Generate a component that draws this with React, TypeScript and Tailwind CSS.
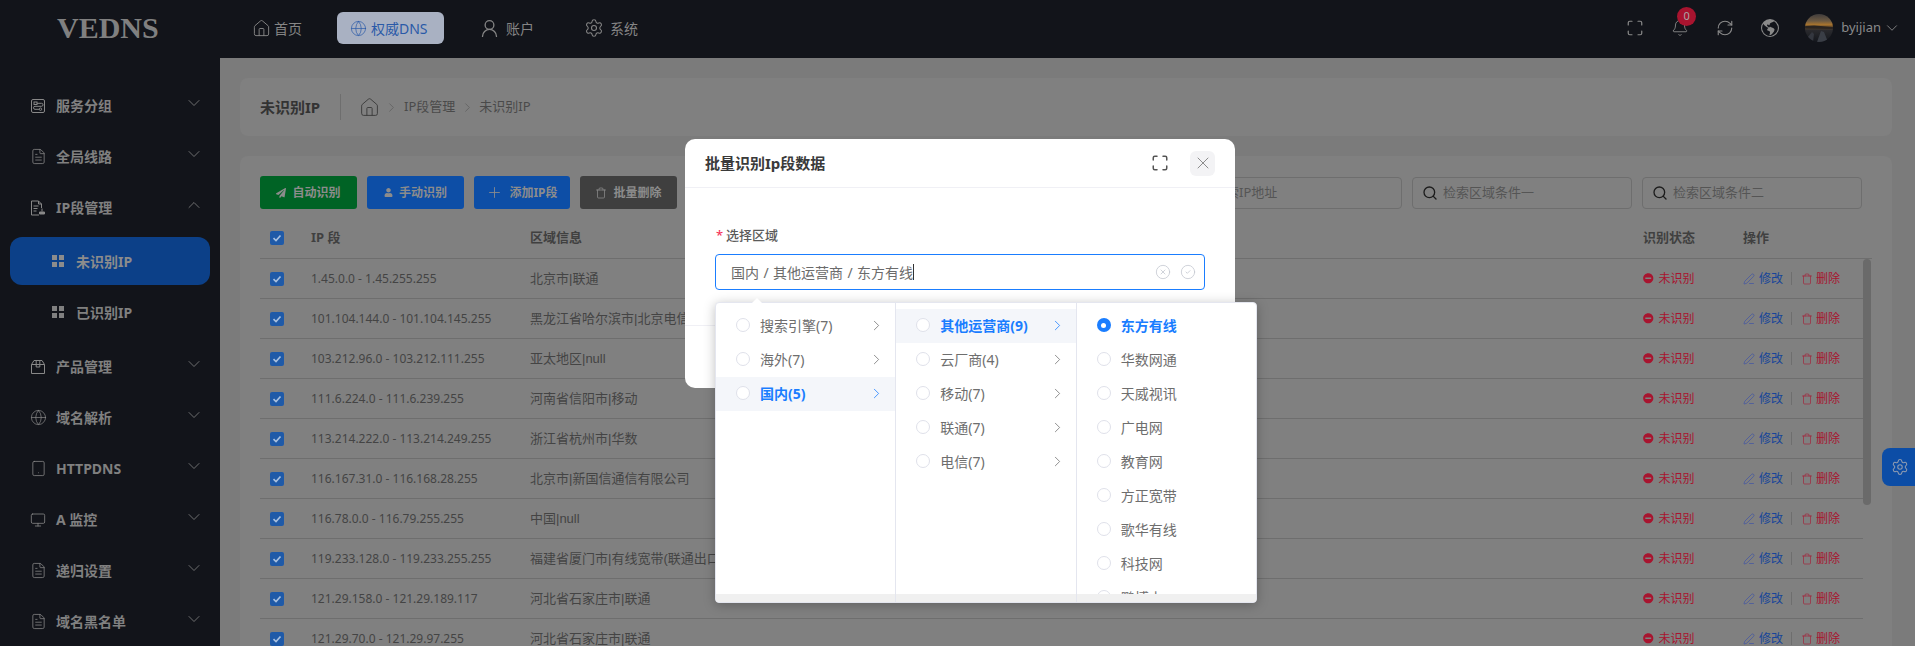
import React from "react";
import {
  House, Globe, UserRound, Settings, ChevronDown, ChevronUp, ChevronRight, FileText, Tablet, Monitor,
  Maximize, Bell, RefreshCw, Plus, Trash, Search, PenLine, X, CircleX, CircleCheck,
} from "lucide-react";
import { FaPaperPlane, FaUser, FaMinusCircle } from "react-icons/fa";
import { BsGlobeAmericas } from "react-icons/bs";

const ServiceIcon = () => (
  <svg width="14" height="14" viewBox="0 0 14 14" fill="none" stroke="currentColor" strokeWidth="1" className="shrink-0">
    <rect x="0.5" y="0.5" width="13" height="13" rx="1.5" />
    <rect x="3" y="3" width="3" height="2.5" />
    <path d="M6 4.3h4.5a1 1 0 0 1 0 3H4a1.3 1.3 0 0 0 0 3h4" />
    <circle cx="9.5" cy="10.2" r="1.2" />
  </svg>
);
const StampFileIcon = () => (
  <svg width="16" height="16" viewBox="0 0 16 16" fill="none" stroke="currentColor" strokeWidth="1" className="shrink-0">
    <path d="M9 15H1.5V1h7l3 3v4" />
    <path d="M8.5 1v3h3M3.5 6h5M3.5 8.5h4M3.5 11h3" />
    <path d="M12 8.5v3M9.5 12h5v2h-5z" fill="currentColor" />
  </svg>
);
const BoxIcon = () => (
  <svg width="14" height="14" viewBox="0 0 14 14" fill="none" stroke="currentColor" strokeWidth="1" className="shrink-0">
    <path d="M0.5 4.5h13v9h-13zM0.5 4.5l2.5-4h8l2.5 4" />
    <path d="M5.2 0.5v6.5h3.6V0.5" />
  </svg>
);
const GridIcon = () => (
  <svg width="12" height="12" viewBox="0 0 12 12" fill="currentColor" className="shrink-0">
    <rect x="0" y="0" width="5" height="5" />
    <rect x="7" y="0" width="5" height="5" />
    <rect x="0" y="7" width="5" height="5" />
    <rect x="7" y="7" width="5" height="5" />
  </svg>
);
const Avatar = () => (
  <svg width="28" height="28" viewBox="0 0 28 28" className="rounded-full shrink-0">
    <defs>
      <linearGradient id="sky" x1="0" y1="0" x2="0" y2="1">
        <stop offset="0" stopColor="#3f3c3c" />
        <stop offset="0.25" stopColor="#6d5a42" />
        <stop offset="0.38" stopColor="#a8742e" />
        <stop offset="0.46" stopColor="#6a4c28" />
        <stop offset="0.58" stopColor="#2a2a2e" />
        <stop offset="1" stopColor="#14171d" />
      </linearGradient>
    </defs>
    <rect width="28" height="28" fill="url(#sky)" />
    <path d="M0 12 L9 11.5 L28 13 L28 15 L0 14.5 Z" fill="#2a2420" />
    <path d="M12 28 L16 17 L19 18 L23 28 Z" fill="#3a3e46" />
    <path d="M2 24 L7 18 L9 20 L8 28 L2 28 Z" fill="#34373f" />
  </svg>
);

const menu = [
  { label: "服务分组", icon: <ServiceIcon /> },
  { label: "全局线路", icon: <FileText size={17} strokeWidth={1.1} className="shrink-0" /> },
  { label: "IP段管理", icon: <StampFileIcon />, open: true },
  { label: "产品管理", icon: <BoxIcon /> },
  { label: "域名解析", icon: <Globe size={17} strokeWidth={1} className="shrink-0" /> },
  { label: "HTTPDNS", icon: <Tablet size={17} strokeWidth={1.1} className="shrink-0" /> },
  { label: "A 监控", icon: <Monitor size={16} strokeWidth={1.2} className="shrink-0" /> },
  { label: "递归设置", icon: <FileText size={17} strokeWidth={1.1} className="shrink-0" /> },
  { label: "域名黑名单", icon: <FileText size={17} strokeWidth={1.1} className="shrink-0" /> },
];

const rows = [
  ["1.45.0.0 - 1.45.255.255", "北京市|联通"],
  ["101.104.144.0 - 101.104.145.255", "黑龙江省哈尔滨市|北京电信通"],
  ["103.212.96.0 - 103.212.111.255", "亚太地区|null"],
  ["111.6.224.0 - 111.6.239.255", "河南省信阳市|移动"],
  ["113.214.222.0 - 113.214.249.255", "浙江省杭州市|华数"],
  ["116.167.31.0 - 116.168.28.255", "北京市|新国信通信有限公司"],
  ["116.78.0.0 - 116.79.255.255", "中国|null"],
  ["119.233.128.0 - 119.233.255.255", "福建省厦门市|有线宽带(联通出口)"],
  ["121.29.158.0 - 121.29.189.117", "河北省石家庄市|联通"],
  ["121.29.70.0 - 121.29.97.255", "河北省石家庄市|联通"],
];

const Check = () => (
  <span className="w-[14px] h-[14px] rounded-[2px] bg-[#1f5aa8] flex items-center justify-center shrink-0">
    <svg width="10" height="10" viewBox="0 0 10 10" fill="none" stroke="#a8c0e0" strokeWidth="1.6">
      <path d="M1.5 5.2 L4 7.6 L8.5 2.4" />
    </svg>
  </span>
);

const Radio = ({ on }: { on?: boolean }) =>
  on ? (
    <span className="w-[14px] h-[14px] rounded-full bg-[#1a7dff] flex items-center justify-center shrink-0">
      <span className="w-[5px] h-[5px] rounded-full bg-white" />
    </span>
  ) : (
    <span className="w-[14px] h-[14px] rounded-full border border-[#dfe1ea] bg-white shrink-0" />
  );

const CasRow = ({ label, active, arrow, on }: { label: string; active?: boolean; arrow?: boolean; on?: boolean }) => (
  <div className={`h-[34px] shrink-0 flex items-center pl-[20px] pr-[10px] pb-[2px] text-[14px] ${active ? "bg-[#f4f6fa]" : ""}`}>
    <Radio on={on} />
    <span className={`ml-[10px] whitespace-nowrap ${active || on ? "text-[#1a7dff] font-bold" : "text-[#6e6e6e]"}`}>{label}</span>
    {arrow && (
      <ChevronRight size={17} strokeWidth={1.1} className={`ml-auto ${active ? "text-[#1a7dff]" : "text-[#707070]"}`} />
    )}
  </div>
);

const CasColumn = ({ children, border }: { children: React.ReactNode; border?: boolean }) => (
  <div className={`w-[180px] flex-1 flex flex-col ${border ? "border-r border-[#e4e6ef]" : ""}`}>
    <div className="flex-1 min-h-0 overflow-hidden pt-[6px] flex flex-col">{children}</div>
    <div className="h-[8px] shrink-0 bg-[#f0f0f0]" />
  </div>
);

const SearchBox = ({ w, text }: { w: string; text: string }) => (
  <div className={`${w} h-[32px] border border-[#6e6e6e] rounded-[4px] flex items-center pl-[9px] gap-[5px] text-[13px] text-[#555]`}>
    <Search size={16} strokeWidth={2} className="text-[#1c1c1c] shrink-0" />
    <span className="whitespace-nowrap">{text}</span>
  </div>
);

const ActionButton = ({ bg, icon, label, w }: { bg: string; icon: React.ReactNode; label: string; w: string }) => (
  <div className={`${bg} ${w} h-[33px] rounded-[3px] flex items-center justify-center gap-[6px] text-[12px] font-bold text-[#8c8c8c]`}>
    {icon}
    {label}
  </div>
);

export default function App() {
  return (
    <div className="relative w-[1915px] h-[646px] overflow-hidden flex flex-col bg-[#7b7b7b] font-['Noto_Sans','Noto_Sans_CJK_SC',sans-serif]">
      {/* top bar */}
      <header className="h-[58px] shrink-0 bg-[#12141a] flex items-center pb-[2px] text-[#858585] text-[14px]">
        <div className="w-[240px] shrink-0 pl-[57px] font-['Liberation_Serif',serif] font-bold text-[30px] text-[#808080] leading-none">
          VEDNS
        </div>
        <div className="flex items-center">
          <div className="flex items-center gap-[3px] ml-[12px]">
            <House size={19} strokeWidth={1.2} />
            <span>首页</span>
          </div>
          <div className="ml-[35px] h-[32px] w-[107px] rounded-[6px] bg-[#a9b1c2] text-[#2a5aa8] flex items-center pl-[13px] gap-[4px]">
            <Globe size={17} strokeWidth={1} />
            <span>权威DNS</span>
          </div>
          <div className="ml-[35px] flex items-center gap-[6px]">
            <UserRound size={21} strokeWidth={1.5} />
            <span>账户</span>
          </div>
          <div className="ml-[50px] flex items-center gap-[6px]">
            <Settings size={20} strokeWidth={1.3} />
            <span>系统</span>
          </div>
        </div>
        <div className="ml-auto flex items-center pr-[14px] text-[#8a8a8a]">
          <Maximize size={18} strokeWidth={1.6} />
          <div className="relative ml-[27px]">
            <Bell size={18} strokeWidth={1.2} />
            <span className="absolute -top-[12px] left-[6px] w-[19px] h-[19px] rounded-full bg-[#a8142f] text-[#a8a8a8] text-[11px] flex items-center justify-center">0</span>
          </div>
          <RefreshCw size={18} strokeWidth={1.5} className="ml-[27px]" />
          <BsGlobeAmericas size={18} className="ml-[27px]" />
          <div className="ml-[26px]"><Avatar /></div>
          <span className="ml-[8px] text-[13px]">byijian</span>
          <ChevronDown size={18} strokeWidth={1.2} className="ml-[2px]" />
        </div>
      </header>

      <div className="flex flex-1 min-h-0">
        {/* sidebar */}
        <aside className="w-[220px] shrink-0 bg-[#12141a] pt-[22px] text-[#808080] text-[14px] font-bold">
          {menu.map((m) => (
            <div key={m.label}>
              <div className="h-[51px] flex items-center pl-[31px] pr-[16px]">
                <span className="w-[14px] flex justify-center shrink-0 text-[#888]">{m.icon}</span>
                <span className="ml-[11px] whitespace-nowrap">{m.label}</span>
                {m.open ? (
                  <ChevronUp size={20} strokeWidth={1} className="ml-auto -mt-[6px]" />
                ) : (
                  <ChevronDown size={20} strokeWidth={1} className="ml-auto -mt-[6px]" />
                )}
              </div>
              {m.open && (
                <div className="pt-[4px] pb-[5px]">
                  <div className="mx-[10px] h-[48px] rounded-[12px] bg-[#0c4088] flex items-center pl-[42px] gap-[12px] text-[#8c8c8c]">
                    <GridIcon />
                    <span>未识别IP</span>
                  </div>
                  <div className="mx-[10px] mt-[3px] h-[48px] flex items-center pl-[42px] gap-[12px]">
                    <GridIcon />
                    <span>已识别IP</span>
                  </div>
                </div>
              )}
            </div>
          ))}
        </aside>

        {/* main */}
        <main className="flex-1 min-w-0 pl-[20px] pr-[23px] pt-[20px] flex flex-col gap-[20px] text-[#444]">
          <div className="h-[58px] shrink-0 bg-[#808080] rounded-[8px] flex items-center pl-[20px]">
            <span className="text-[15px] font-bold text-[#333] w-[80px]">未识别IP</span>
            <span className="w-px h-[26px] bg-[#6e6e6e]" />
            <House size={21} strokeWidth={1.1} className="ml-[18px] text-[#3c3c3c]" />
            <ChevronRight size={15} strokeWidth={1.2} className="ml-[4px] text-[#5e5e5e]" />
            <span className="ml-[5px] text-[13px] text-[#4a4a4a]">IP段管理</span>
            <ChevronRight size={15} strokeWidth={1.2} className="ml-[5px] text-[#5e5e5e]" />
            <span className="ml-[4px] text-[13px] text-[#4a4a4a]">未识别IP</span>
          </div>

          <div className="flex-1 bg-[#808080] rounded-t-[8px] px-[20px] pt-[20px] min-h-0">
            <div className="flex items-center">
              <div className="flex gap-[10px]">
                <ActionButton bg="bg-[#006325]" w="w-[97px]" icon={<FaPaperPlane size={10} />} label="自动识别" />
                <ActionButton bg="bg-[#0d4ea6]" w="w-[97px]" icon={<FaUser size={9} />} label="手动识别" />
                <ActionButton bg="bg-[#0d4ea6]" w="w-[96px]" icon={<Plus size={17} strokeWidth={1.2} />} label="添加IP段" />
                <ActionButton bg="bg-[#3f3f3f]" w="w-[97px]" icon={<Trash size={12} strokeWidth={1.5} />} label="批量删除" />
              </div>
              <div className="ml-auto flex gap-[10px] pr-[10px]">
                <SearchBox w="w-[220px]" text="检索IP地址" />
                <SearchBox w="w-[220px]" text="检索区域条件一" />
                <SearchBox w="w-[220px]" text="检索区域条件二" />
              </div>
            </div>

            <div className="h-[50px] pt-[9px] flex items-center pl-[10px] border-b border-[#6e6e6e] text-[13px] font-bold text-[#404040]">
              <span className="w-[41px]"><Check /></span>
              <span className="w-[219px]">IP 段</span>
              <span className="w-[1113px]">区域信息</span>
              <span className="w-[100px]">识别状态</span>
              <span>操作</span>
            </div>

            <div className="relative">
              <div className="w-[1603px]">
                {rows.map(([ip, area]) => (
                  <div key={ip} className="h-[40px] flex items-center pl-[10px] border-b border-[#6e6e6e] text-[13px] text-[#444]">
                    <span className="w-[41px]"><Check /></span>
                    <span className="w-[219px] text-[12px]">{ip}</span>
                    <span className="w-[1113px] whitespace-nowrap font-['Liberation_Sans','Noto_Sans_CJK_SC',sans-serif]">{area}</span>
                    <span className="w-[100px] flex items-center gap-[5px] text-[12px] text-[#a8142f]">
                      <FaMinusCircle size={10.5} />
                      未识别
                    </span>
                    <span className="flex items-center text-[12px]">
                      <PenLine size={12} strokeWidth={1.3} className="text-[#3a50a8]" />
                      <span className="ml-[4px] text-[#17459a]">修改</span>
                      <span className="ml-[8px] w-px h-[13px] bg-[#6e6e6e]" />
                      <Trash size={12} strokeWidth={1.2} className="ml-[9px] text-[#a8142f]" />
                      <span className="ml-[3px] text-[#a8142f]">删除</span>
                    </span>
                  </div>
                ))}
              </div>
              <span className="absolute top-0 right-[1px] w-[8px] h-[246px] rounded-[4px] bg-[#6a6a6a]" />
            </div>
          </div>
        </main>
      </div>

      {/* floating settings tab */}
      <div className="absolute left-[1882px] top-[448px] w-[33px] h-[38px] rounded-l-[8px] bg-[#0c4da6] flex items-center justify-center pl-[3px] text-[#8f9bb0]">
        <Settings size={18} strokeWidth={1.4} />
      </div>

      {/* modal */}
      <div className="absolute left-[685px] top-[139px] w-[550px] h-[249px] bg-white rounded-[10px] flex flex-col">
        <div className="h-[49px] shrink-0 border-b border-[#f0f0f5] flex items-center pl-[20px] pr-[20px]">
          <span className="text-[15px] font-bold text-[#3a3a3a]">批量识别Ip段数据</span>
          <Maximize size={18} strokeWidth={2} className="ml-auto text-[#555]" />
          <span className="ml-[21px] w-[25px] h-[25px] rounded-[6px] bg-[#f3f3f5] flex items-center justify-center text-[#777]">
            <X size={20} strokeWidth={1} />
          </span>
        </div>
        <div className="h-[138px] shrink-0 border-b border-[#f0f0f5] pl-[30px] pr-[30px] pt-[39px]">
          <div className="flex items-center h-[18px] pl-[1px] text-[13px] font-medium text-[#5a5a5a]">
            <span className="text-[#f5365c] w-[10px]">*</span>
            选择区域
          </div>
          <div className="mt-[9px] h-[36px] rounded-[4px] border border-[#1a7dff] flex items-center pl-[15px] pr-[8px] text-[14px] text-[#6b6b6b]">
            <span className="[word-spacing:0.75px]">国内 / 其他运营商 / 东方有线</span>
            <span className="w-px h-[16px] bg-[#333]" />
            <CircleX size={16} strokeWidth={1.2} className="ml-auto text-[#c4c8d0]" />
            <CircleCheck size={16} strokeWidth={1.2} className="ml-[9px] text-[#c4c8d0]" />
          </div>
        </div>
      </div>

      {/* cascader */}
      <div className="absolute left-[715px] top-[302px] w-[542px] h-[301px] bg-white rounded-[4px] border border-[#e4e6ef] shadow-[0_2px_12px_rgba(0,0,0,0.25)] flex overflow-hidden">
        <CasColumn border>
          <CasRow label="搜索引擎(7)" arrow />
          <CasRow label="海外(7)" arrow />
          <CasRow label="国内(5)" arrow active />
        </CasColumn>
        <CasColumn border>
          <CasRow label="其他运营商(9)" arrow active />
          <CasRow label="云厂商(4)" arrow />
          <CasRow label="移动(7)" arrow />
          <CasRow label="联通(7)" arrow />
          <CasRow label="电信(7)" arrow />
        </CasColumn>
        <CasColumn>
          <CasRow label="东方有线" on />
          {["华数网通", "天威视讯", "广电网", "教育网", "方正宽带", "歌华有线", "科技网", "鹏博士"].map((t) => (
            <CasRow key={t} label={t} />
          ))}
        </CasColumn>
      </div>
      <span className="absolute left-[752px] top-[298px] w-0 h-0 border-x-[5px] border-x-transparent border-b-[5px] border-b-white" />
    </div>
  );
}
